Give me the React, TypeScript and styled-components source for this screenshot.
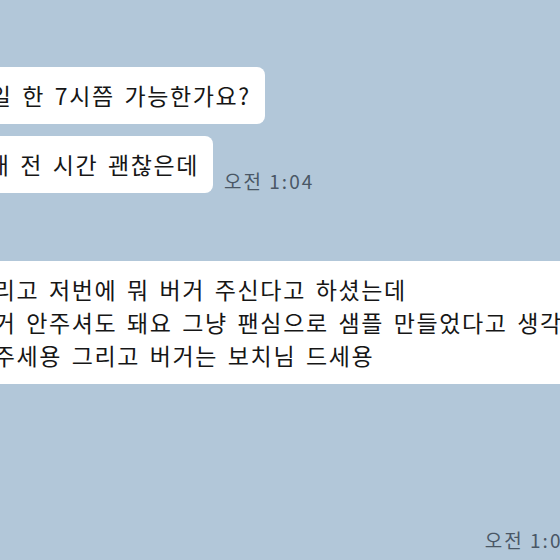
import styled, { createGlobalStyle } from 'styled-components';

const GlobalStyle = createGlobalStyle`
	html, body {
		margin: 0;
		padding: 0;
		background-color: #b2c7d9;
	}
`;

const Tela = styled.div`
	width: 560px;
	height: 560px;
	overflow: hidden;
	background-color: #b2c7d9;
	font-family: 'Noto Sans CJK KR', 'Noto Sans', sans-serif;
	color: #161616;
`;

const Conversa = styled.div`
	display: flex;
	flex-direction: column;
	padding-top: 67px;
`;

const Grupo = styled.div`
	display: flex;
	flex-direction: column;
	gap: 12px;
	margin-bottom: 68px;
`;

const Linha = styled.div<{ $cortado: number }>`
	display: flex;
	align-items: flex-end;
	margin-left: -${(p) => p.$cortado}px;
`;

const Balao = styled.div`
	background-color: #fff;
	border-radius: 8px;
	padding: 12px 14px;
	font-size: 23px;
	line-height: 33px;
	letter-spacing: 1.6px;
	word-spacing: 3px;
	white-space: nowrap;
`;

const Hora = styled.span`
	font-size: 19px;
	line-height: 22px;
	letter-spacing: 2px;
	color: #4a5766;
	margin: 0 0 1px 11px;
	white-space: nowrap;
`;

const LinhaMinha = styled.div`
	display: flex;
	justify-content: flex-end;
	margin-top: 145px;
	margin-right: -15px;
`;

export default function App() {
	return (
		<>
			<GlobalStyle />
			<Tela>
				<Conversa>
					<Grupo>
						<Linha $cortado={47}>
							<Balao>내일 한 7시쯤 가능한가요?</Balao>
						</Linha>
						<Linha $cortado={49}>
							<Balao>그래 전 시간 괜찮은데</Balao>
							<Hora>오전 1:04</Hora>
						</Linha>
					</Grupo>
					<Linha $cortado={43}>
						<Balao>
							그리고 저번에 뭐 버거 주신다고 하셨는데
							<br />
							그거 안주셔도 돼요 그냥 팬심으로 샘플 만들었다고 생각해
							<br />
							해주세용 그리고 버거는 보치님 드세용
						</Balao>
					</Linha>
					<LinhaMinha>
						<Hora>오전 1:04</Hora>
					</LinhaMinha>
				</Conversa>
			</Tela>
		</>
	);
}
